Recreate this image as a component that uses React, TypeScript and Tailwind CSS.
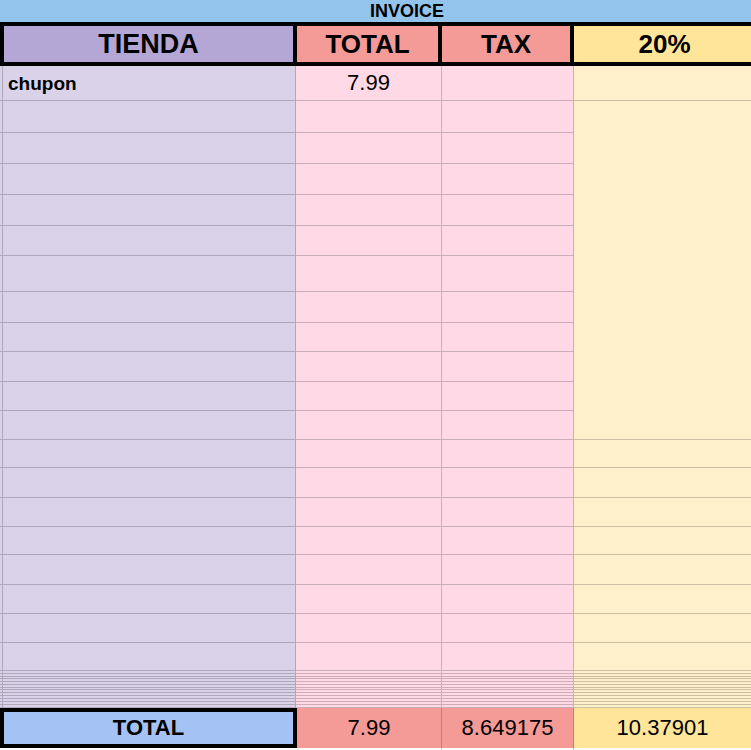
import React from "react";

const rowHeights = [
  "h-[35px]",
  "h-[32px]",
  "h-[31px]",
  "h-[31px]",
  "h-[31px]",
  "h-[30px]",
  "h-[36px]",
  "h-[31px]",
  "h-[29px]",
  "h-[30px]",
  "h-[29px]",
  "h-[29px]",
  "h-[28px]",
  "h-[30px]",
  "h-[29px]",
  "h-[28px]",
  "h-[30px]",
  "h-[29px]",
  "h-[29px]",
  "h-[28px]",
  "h-[3px]",
  "h-[3px]",
  "h-[2px]",
  "h-[3px]",
  "h-[3px]",
  "h-[3px]",
  "h-[2px]",
  "h-[3px]",
  "h-[3px]",
  "h-[3px]",
  "h-[3px]",
  "h-[3px]",
  "h-[3px]",
];

const line = "border-black/20";

export default function App() {
  return (
    <div
      className="w-[751px] h-[750px] overflow-hidden bg-white text-black"
      style={{ fontFamily: '"Liberation Sans", Arial, Helvetica, sans-serif' }}
    >
      {/* INVOICE bar */}
      <div className="h-[22px] bg-[#93c4ec] flex items-center pl-[370px]">
        <span className="text-[18px] font-bold leading-none">INVOICE</span>
      </div>

      {/* Header row */}
      <div className="h-[44px] bg-black p-[4px] pr-0 flex gap-[4px]">
        <div className="w-[289px] bg-[#b4a7d6] flex items-center justify-center text-[27px] font-bold leading-none">
          TIENDA
        </div>
        <div className="w-[141px] bg-[#f49a97] flex items-center justify-center text-[26px] font-bold leading-none">
          TOTAL
        </div>
        <div className="w-[128px] bg-[#f49a97] flex items-center justify-center text-[26px] font-bold leading-none">
          TAX
        </div>
        <div className="flex-1 bg-[#ffe599] flex items-center justify-center text-[26px] font-bold leading-none pl-[4px]">
          20%
        </div>
      </div>

      {/* Body rows */}
      <div className="flex flex-col">
        {rowHeights.map((h, i) => {
          const yellowNoLine = i >= 1 && i <= 10;
          return (
            <div key={i} className={`flex ${h}`}>
              <div
                className={`w-[296px] bg-[#d9d2e9] border-b border-r ${line} shadow-[inset_2px_0_0_#d9d2e9,inset_3px_0_0_rgba(0,0,0,0.2)] flex items-center pl-[8px]`}
              >
                {i === 0 && (
                  <span className="text-[19px] font-bold leading-none">chupon</span>
                )}
              </div>
              <div
                className={`w-[146px] bg-[#ffdae6] border-b border-r ${line} flex items-center justify-center`}
              >
                {i === 0 && (
                  <span className="text-[22px] leading-none">7.99</span>
                )}
              </div>
              <div className={`w-[132px] bg-[#ffdae6] border-b border-r ${line}`} />
              <div
                className={`flex-1 bg-[#fff0cc] border-b ${
                  yellowNoLine ? "border-transparent" : line
                }`}
              />
            </div>
          );
        })}
      </div>

      {/* Total row */}
      <div className="flex h-[40px]">
        <div className="w-[297px] border-4 border-black bg-[#a4c2f4] flex items-center justify-center text-[22px] font-bold leading-none">
          TOTAL
        </div>
        <div className={`w-[145px] bg-[#f49a97] border-r ${line} flex items-center justify-center text-[22px] leading-none`}>
          7.99
        </div>
        <div className={`w-[132px] bg-[#f49a97] border-r ${line} flex items-center justify-center text-[22px] leading-none`}>
          8.649175
        </div>
        <div className="flex-1 bg-[#ffe599] flex items-center justify-center text-[22px] leading-none">
          10.37901
        </div>
      </div>
      <div className="flex h-[2px]">
        <div className={`w-[442px] border-r ${line}`} />
        <div className={`w-[132px] border-r ${line}`} />
        <div className="flex-1" />
      </div>
    </div>
  );
}
